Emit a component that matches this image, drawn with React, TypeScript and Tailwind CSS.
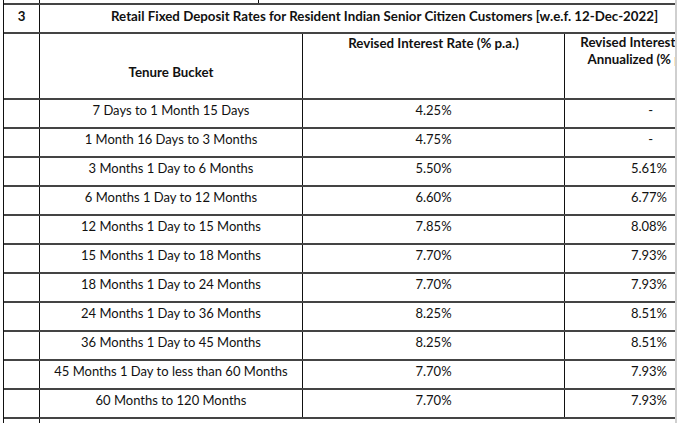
const rows: [string, string, string][] = [
  ["7 Days to 1 Month 15 Days", "4.25%", "-"],
  ["1 Month 16 Days to 3 Months", "4.75%", "-"],
  ["3 Months 1 Day to 6 Months", "5.50%", "5.61%"],
  ["6 Months 1 Day to 12 Months", "6.60%", "6.77%"],
  ["12 Months 1 Day to 15 Months", "7.85%", "8.08%"],
  ["15 Months 1 Day to 18 Months", "7.70%", "7.93%"],
  ["18 Months 1 Day to 24 Months", "7.70%", "7.93%"],
  ["24 Months 1 Day to 36 Months", "8.25%", "8.51%"],
  ["36 Months 1 Day to 45 Months", "8.25%", "8.51%"],
  ["45 Months 1 Day to less than 60 Months", "7.70%", "7.93%"],
  ["60 Months to 120 Months", "7.70%", "7.93%"],
];

export default function App() {
  return (
    <div className="flex h-[423px] w-[680px] overflow-hidden bg-white pl-[3px] font-['Lato',sans-serif] text-[13px] leading-[18px] text-[#111]">
      <div className="w-[672px] shrink-0 overflow-hidden border-l border-[#111]">
        {/* row above, cut off */}
        <div className="flex h-[5px] border-b-2 border-[#444]">
          <div className="w-[36px] border-r border-[#111]" />
          <div className="w-[219px] border-r border-[#111]" />
        </div>

        {/* title row */}
        <div className="flex h-[29px] border-b-2 border-[#444] text-[13.3px] font-bold">
          <div className="w-[36px] shrink-0 border-r border-[#111] pt-[2px] text-center">3</div>
          <div className="flex-1 overflow-hidden whitespace-nowrap pl-[71px] pt-[2px]">
            Retail Fixed Deposit Rates for Resident Indian Senior Citizen Customers [w.e.f. 12-Dec-2022]
          </div>
        </div>

        {/* column headings */}
        <div className="flex h-[66px] border-b-2 border-[#444] text-[13.3px] font-bold">
          <div className="w-[36px] shrink-0 border-r border-[#111]" />
          <div className="flex w-[263px] shrink-0 items-end justify-center border-r border-[#111] pb-[17px]">
            Tenure Bucket
          </div>
          <div className="w-[262px] shrink-0 border-r border-[#111] text-center">
            Revised Interest Rate (% p.a.)
          </div>
          <div className="flex-1 overflow-hidden">
            <div className="w-[156px] text-center leading-[17px]">
              Revised Interest Rate
              <br />
              Annualized (% p.a.)
            </div>
          </div>
        </div>

        {rows.map(([tenure, rate, annual]) => (
          <div key={tenure} className="flex h-[29px] border-b-2 border-[#444]">
            <div className="w-[36px] shrink-0 border-r border-[#111]" />
            <div className="w-[263px] shrink-0 border-r border-[#111] pt-[1px] text-center">{tenure}</div>
            <div className="w-[262px] shrink-0 border-r border-[#111] pt-[1px] text-center">{rate}</div>
            <div className={`flex-1 pt-[1px] text-right ${annual === "-" ? "pr-[22px]" : "pr-[8px]"}`}>{annual}</div>
          </div>
        ))}

        {/* row below, cut off */}
        <div className="flex h-[5px]">
          <div className="w-[36px] border-r border-[#111]" />
        </div>
      </div>
      <div className="w-[2px] shrink-0 bg-[#cfcfcf]" />
    </div>
  );
}
